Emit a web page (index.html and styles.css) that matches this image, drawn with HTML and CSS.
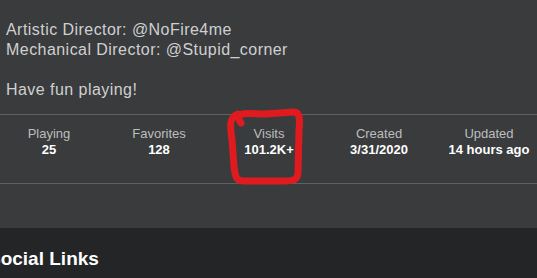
FILE: index.html
```html
<!DOCTYPE html>
<html lang="en">
<head>
    <meta name="viewport" content="width=device-width, initial-scale=1.0">
    <title>Game About</title>
    <link rel="stylesheet" href="styles.css">
</head>
<body>
    <section class="about-part">
        <div class="description">
            <p>Artistic Director: @NoFire4me</p>
            <p>Mechanical Director: @Stupid_corner</p>
            <p class="blank"></p>
            <p>Have fun playing!</p>
        </div>
        <ul class="stats">
            <li class="stat"><p class="stat-label">Playing</p><p class="stat-value">25</p></li>
            <li class="stat"><p class="stat-label">Favorites</p><p class="stat-value">128</p></li>
            <li class="stat"><p class="stat-label">Visits</p><p class="stat-value">101.2K+</p></li>
            <li class="stat"><p class="stat-label">Created</p><p class="stat-value">3/31/2020</p></li>
            <li class="stat"><p class="stat-label">Updated</p><p class="stat-value">14 hours ago</p></li>
        </ul>
        <svg class="scribble" width="537" height="278" viewBox="0 0 537 278">
            <path d="M241 123 C232 110 250 114 265 114 L294 112 C300 112 300 120 299 130 L298 172 C298 180 293 181 285 181 L243 181 C236 181 235 176 234 166 L232 140 C230 126 229 117 238 114"
                  fill="none" stroke="#e01b1f" stroke-width="7" stroke-linecap="round" stroke-linejoin="round"/>
        </svg>
    </section>
    <section class="social-part">
        <h2>Social Links</h2>
    </section>
</body>
</html>
```
FILE: styles.css
```css
* {
    margin: 0;
    padding: 0;
    box-sizing: border-box;
}
body {
    width: 537px;
    height: 278px;
    overflow: hidden;
    background-color: #232527;
    font-family: "Liberation Sans", Arial, sans-serif;
}
.about-part {
    position: relative;
    height: 228px;
    background-color: #393b3d;
    padding-top: 20px;
}
.description {
    padding-left: 6px;
    font-size: 16px;
    line-height: 20px;
    letter-spacing: 0.45px;
    color: #cfd0d1;
}
.description .blank {
    height: 20px;
}
.stats {
    list-style: none;
    display: flex;
    margin-top: 14px;
    border-top: 1px solid #5e6062;
    border-bottom: 1px solid #5e6062;
    height: 70px;
    padding-top: 11px;
}
.stat {
    width: 110px;
    flex-shrink: 0;
    text-align: center;
    font-size: 13px;
    line-height: 16px;
}
.stat:first-child {
    margin-left: -6px;
}
.stat-label {
    color: #bdbebe;
}
.stat-value {
    color: #ffffff;
    font-weight: 700;
}
.scribble {
    position: absolute;
    left: 0;
    top: 0;
}
.social-part {
    padding-top: 19px;
}
.social-part h2 {
    margin-left: -12px;
    font-size: 19px;
    line-height: 24px;
    font-weight: 700;
    color: #ffffff;
}
```
